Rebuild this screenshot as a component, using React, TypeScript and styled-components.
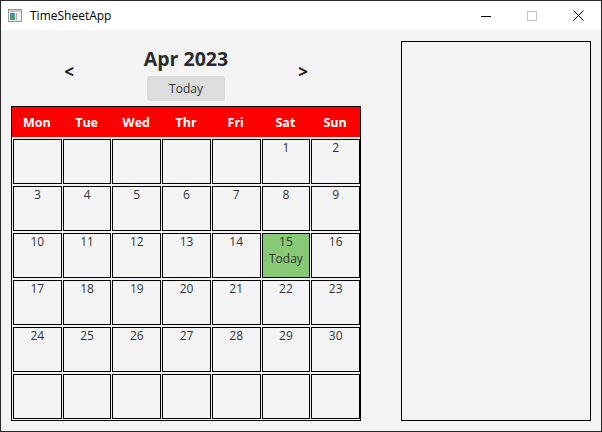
import React from 'react';
import styled, { createGlobalStyle } from 'styled-components';

const GlobalStyle = createGlobalStyle`
  html, body {
    margin: 0;
    padding: 0;
    background: #ffffff;
  }
  * {
    box-sizing: border-box;
  }
`;

const FONT = `"Open Sans", "Noto Sans", "Liberation Sans", sans-serif`;

const Window = styled.div`
  width: 602px;
  height: 432px;
  border: 1px solid #2b2b2b;
  display: flex;
  flex-direction: column;
  font-family: ${FONT};
  background: #f4f4f4;
`;

const TitleBar = styled.div`
  height: 29px;
  flex: none;
  background: #ffffff;
  display: flex;
  align-items: center;
  padding-left: 7px;
`;

const AppTitle = styled.span`
  font-size: 12px;
  color: #000000;
  margin-left: 8px;
  flex: 1;
`;

const Controls = styled.div`
  display: flex;
  height: 100%;
`;

const ControlButton = styled.div`
  width: 46px;
  height: 100%;
  display: flex;
  align-items: center;
  justify-content: center;
`;

const Client = styled.div`
  flex: 1;
  display: flex;
  padding: 11px 9px 10px 10px;
  gap: 40px;
`;

const CalendarPane = styled.div`
  width: 350px;
  display: flex;
  flex-direction: column;
`;

const NavRow = styled.div`
  display: grid;
  grid-template-columns: 116px 118px 116px;
  align-items: center;
  height: 60px;
`;

const Arrow = styled.button`
  justify-self: center;
  border: none;
  background: transparent;
  padding: 0;
  font-family: ${FONT};
  font-weight: 700;
  font-size: 17px;
  color: #222222;
`;

const MonthBlock = styled.div`
  align-self: end;
  display: flex;
  flex-direction: column;
  align-items: center;
  gap: 4px;
`;

const MonthTitle = styled.div`
  font-size: 19.5px;
  font-weight: 700;
  color: #2b2b2b;
  line-height: 26px;
`;

const TodayButton = styled.button`
  width: 78px;
  height: 25px;
  border: none;
  border-radius: 3px;
  background: #dddddd;
  font-family: ${FONT};
  font-size: 12px;
  color: #333333;
  padding: 0;
`;

const Grid = styled.div`
  margin-top: 5px;
  border: 1px solid #000000;
  width: 350px;
  height: 315px;
  display: flex;
  flex-direction: column;
`;

const HeaderRow = styled.div`
  height: 30px;
  background: #ff0000;
  display: grid;
  grid-template-columns: repeat(7, 1fr);
  align-items: center;
`;

const DayName = styled.div`
  text-align: center;
  color: #ffffff;
  font-weight: 700;
  font-size: 12.5px;
`;

const Days = styled.div`
  flex: 1;
  display: grid;
  grid-template-columns: repeat(7, 1fr);
  grid-template-rows: repeat(6, 45px);
  column-gap: 1px;
  row-gap: 2px;
  padding: 2px 0 1px 1px;
`;

const Cell = styled.div<{ $today?: boolean }>`
  border: 1px solid #000000;
  background: ${(p) => (p.$today ? '#88c976' : '#f4f4f4')};
  display: flex;
  flex-direction: column;
  align-items: center;
  font-size: 12px;
  line-height: 16.5px;
  color: #333333;
`;

const SidePanel = styled.div`
  width: 190px;
  height: 380px;
  border: 1px solid #000000;
`;

const days = ['Mon', 'Tue', 'Wed', 'Thr', 'Fri', 'Sat', 'Sun'];

function AppIcon() {
  return (
    <svg width="14" height="13" viewBox="0 0 14 13">
      <rect x="0.5" y="0.5" width="13" height="12" fill="#f0f0f0" stroke="#9a9a9a" />
      <rect x="1" y="1" width="12" height="2" fill="#c8c8c8" />
      <defs>
        <linearGradient id="g" x1="0" y1="0" x2="0" y2="1">
          <stop offset="0" stopColor="#3a8fd0" />
          <stop offset="1" stopColor="#5aa04a" />
        </linearGradient>
      </defs>
      <rect x="2" y="4" width="5" height="7" fill="url(#g)" />
      <rect x="8" y="4" width="1" height="7" fill="#b0b0b0" />
    </svg>
  );
}

export default function App() {
  const cells: { day?: number }[] = [];
  for (let i = 0; i < 5; i++) cells.push({});
  for (let d = 1; d <= 30; d++) cells.push({ day: d });
  while (cells.length < 42) cells.push({});

  return (
    <>
      <GlobalStyle />
      <Window>
        <TitleBar>
          <AppIcon />
          <AppTitle>TimeSheetApp</AppTitle>
          <Controls>
            <ControlButton>
              <svg width="10" height="10" viewBox="0 0 10 10">
                <line x1="0" y1="5.5" x2="10" y2="5.5" stroke="#000" strokeWidth="1" />
              </svg>
            </ControlButton>
            <ControlButton>
              <svg width="10" height="10" viewBox="0 0 10 10">
                <rect x="0.5" y="0.5" width="9" height="9" fill="none" stroke="#c4c4c4" />
              </svg>
            </ControlButton>
            <ControlButton>
              <svg width="11" height="11" viewBox="0 0 11 11">
                <path d="M0.5 0.5 L10.5 10.5 M10.5 0.5 L0.5 10.5" stroke="#000" strokeWidth="1" />
              </svg>
            </ControlButton>
          </Controls>
        </TitleBar>
        <Client>
          <CalendarPane>
            <NavRow>
              <Arrow>&lt;</Arrow>
              <MonthBlock>
                <MonthTitle>Apr 2023</MonthTitle>
                <TodayButton>Today</TodayButton>
              </MonthBlock>
              <Arrow>&gt;</Arrow>
            </NavRow>
            <Grid>
              <HeaderRow>
                {days.map((d) => (
                  <DayName key={d}>{d}</DayName>
                ))}
              </HeaderRow>
              <Days>
                {cells.map((c, i) => (
                  <Cell key={i} $today={c.day === 15}>
                    {c.day && <span>{c.day}</span>}
                    {c.day === 15 && <span>Today</span>}
                  </Cell>
                ))}
              </Days>
            </Grid>
          </CalendarPane>
          <SidePanel />
        </Client>
      </Window>
    </>
  );
}
